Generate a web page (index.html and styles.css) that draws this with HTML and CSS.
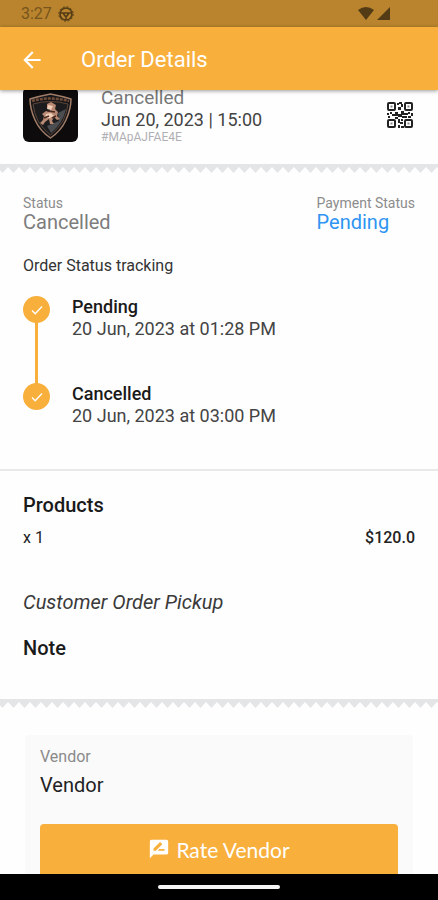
FILE: index.html
```html
<!DOCTYPE html>
<html lang="en">
<head>
<meta charset="utf-8">
<meta name="viewport" content="width=device-width, initial-scale=1">
<title>Order Details</title>
<link rel="stylesheet" href="styles.css">
</head>
<body>
<svg class="defs" aria-hidden="true">
  <defs>
    <pattern id="teeth" width="11" height="9" patternUnits="userSpaceOnUse" x="-3">
      <path d="M0 0H11V3L5.500 9L0 3Z" fill="#e4e5e7"/>
    </pattern>
  </defs>
</svg>
<div class="statusbar">
  <span class="clock">3:27</span>
  <svg class="status-app" viewBox="0 0 16 16" aria-hidden="true">
    <circle cx="8" cy="8" r="6" fill="none" stroke="currentColor" stroke-width="1.600"/>
    <circle cx="8" cy="8" r="7.200" fill="none" stroke="currentColor" stroke-width="1" stroke-dasharray="2 1.800"/>
    <path d="M2 7H14M8 10V14M5 7L7 10H9L11 7" fill="none" stroke="currentColor" stroke-width="1.500"/>
  </svg>
  <span class="signals">
    <svg width="16" height="13" viewBox="0 0 16 13" aria-hidden="true"><path d="M0 3Q8-3 16 3L8 13Z" fill="currentColor"/></svg>
    <svg width="13" height="13" viewBox="0 0 13 13" aria-hidden="true"><path d="M13 0V13H0Z" fill="currentColor"/></svg>
  </span>
</div>
<header class="appbar">
  <button class="back" type="button" aria-label="Back">
    <svg viewBox="0 0 24 24" aria-hidden="true"><path d="M20 11H7.830l5.590-5.590L12 4l-8 8 8 8 1.410-1.410L7.830 13H20z" fill="currentColor"/></svg>
  </button>
  <h1>Order Details</h1>
</header>
<main>
  <section class="summary">
    <svg class="thumb" viewBox="0 0 55 55" role="img" aria-label="Vendor logo">
      <rect width="55" height="55" fill="#0d0b0b"/>
      <path d="M7 12Q17 9 27.500 7Q38 9 48 12Q48 22 43 33Q38 44 27.500 51Q17 44 12 33Q7 22 7 12Z" fill="#17171a" stroke="#a07d68" stroke-width="1.500"/>
      <path d="M10 17Q27 12 45 17Q44 26 40 34Q35 42 27.500 48Q20 42 15 34Q11 26 10 17Z" fill="#1c1c1e" stroke="#5d4638" stroke-width="1"/>
      <path d="M35 26L43 22Q40 36 28 46L24 39L36 34Z" fill="#4b4d50"/>
      <path d="M9 14Q27 9 46 14" fill="none" stroke="#704c39" stroke-width="2.500" stroke-dasharray="3 1"/>
      <path d="M24 17L28 15L33 18L32 22L35 25L34 29L37 32L34 33L31 30L29 34L31 37L27 37L26 32L22 35L20 38L17 36L20 33L21 29L19 27L23 24L26 25L28 22L24 21Z" fill="#b88973"/>
      <path d="M25 18L30 19L28 23L24 22ZM23 27L28 26L31 29L27 31L22 31Z" fill="#f0cdb7"/>
      <path d="M25 24L32 25M21 31L26 29M29 31L33 29" stroke="#4a2921" stroke-width="1.500"/>
    </svg>
    <div class="summary-text">
      <p class="state">Cancelled</p>
      <p class="when">Jun 20, 2023 | 15:00</p>
      <p class="code">#MApAJFAE4E</p>
    </div>
    <button class="qr" type="button" aria-label="Show QR code">
      <svg viewBox="0 0 26 26" aria-hidden="true">
        <g fill="none" stroke="#222" stroke-width="2">
          <rect x="1" y="1" width="7" height="7" rx="1"/><rect x="18" y="1" width="7" height="7" rx="1"/>
          <rect x="1" y="18" width="7" height="7" rx="1"/><rect x="18" y="18" width="7" height="7" rx="1"/>
        </g>
        <path d="M3.500 3.500h2v2h-2zM20.500 3.500h2v2h-2zM3.500 20.500h2v2h-2zM20.500 20.500h2v2h-2z" fill="#888"/>
        <path d="M10 1h2v2h-2zM12 0h3v2h-3zM14 2h2v3h-2zM11 5h3v3h-3zM0 11h2v2h-2zM3 10h2v2h-2zM1 14h2v2h-2zM5 12h4v2h-4zM8 10h3v4h-3zM11 12h4v3h-4zM14 9h3v4h-3zM17 11h4v2h-4zM21 10h2v2h-2zM24 11h2v3h-2zM15 14h5v2h-5zM21 14h3v2h-3zM8 15h3v2h-3zM11 17h2v4h-2zM14 17h2v2h-2zM13 20h3v2h-3zM11 23h2v3h-2zM14 24h3v2h-3z" fill="#222"/>
      </svg>
    </button>
  </section>
  <svg class="zigzag" aria-hidden="true"><rect width="100%" height="9" fill="url(#teeth)"/></svg>
  <section class="status">
    <div class="status-row">
      <div><p class="label">Status</p><p class="value">Cancelled</p></div>
      <div><p class="label">Payment Status</p><p class="value pending">Pending</p></div>
    </div>
    <h2 class="tracking-title">Order Status tracking</h2>
    <ol class="timeline">
      <li>
        <span class="dot"><svg viewBox="0 0 12 12" aria-hidden="true"><path d="M1 6.500L4.200 9.700L11 2.500" fill="none" stroke="#fff" stroke-width="1.300"/></svg></span>
        <div><p class="step">Pending</p><p class="time">20 Jun, 2023 at 01:28 PM</p></div>
      </li>
      <li>
        <span class="dot"><svg viewBox="0 0 12 12" aria-hidden="true"><path d="M1 6.500L4.200 9.700L11 2.500" fill="none" stroke="#fff" stroke-width="1.300"/></svg></span>
        <div><p class="step">Cancelled</p><p class="time">20 Jun, 2023 at 03:00 PM</p></div>
      </li>
    </ol>
  </section>
  <section class="products">
    <h2>Products</h2>
    <div class="product"><span>x 1</span><span class="price">$120.0</span></div>
    <p class="pickup">Customer Order Pickup</p>
    <h2>Note</h2>
  </section>
  <svg class="zigzag" aria-hidden="true"><rect width="100%" height="9" fill="url(#teeth)"/></svg>
  <section class="vendor">
    <p class="vendor-label">Vendor</p>
    <p class="vendor-name">Vendor</p>
    <button class="rate" type="button">
      <svg viewBox="0 0 24 24" aria-hidden="true"><path d="M20 2H4c-1.100 0-1.990.9-1.990 2L2 22l4-4h14c1.100 0 2-.9 2-2V4c0-1.100-.9-2-2-2zM6 14v-2.470l6.880-6.880c.2-.2.510-.2.710 0l1.770 1.770c.2.200.2.510 0 .710L8.470 14H6zm12 0h-7.500l2-2H18v2z" fill="currentColor"/></svg>
      Rate Vendor
    </button>
  </section>
</main>
<div class="navbar"><span class="handle"></span></div>
</body>
</html>
```
FILE: styles.css
```css
* { box-sizing: border-box; }
body, h1, h2, p, ol { margin: 0; padding: 0; }
body {
  height: 100vh;
  display: flex;
  flex-direction: column;
  overflow: hidden;
  background: #fefefe;
  color: #222;
  font-family: Roboto, "Liberation Sans", sans-serif;
  font-size: 18px;
}
button { border: 0; padding: 0; background: none; font: inherit; color: inherit; }
svg { display: block; }
.defs { position: absolute; width: 0; height: 0; }

.statusbar {
  flex: none;
  display: flex;
  align-items: center;
  height: 27px;
  padding: 0 48px 0 21px;
  background: #b9842d;
  color: #533b16;
}
.clock { font-size: 16px; color: #78551e; }
.status-app { width: 16px; height: 16px; margin-left: 6px; }
.signals { display: flex; gap: 3px; margin-left: auto; }

.appbar {
  flex: none;
  position: relative;
  z-index: 1;
  display: flex;
  align-items: center;
  gap: 36px;
  height: 63px;
  padding: 2px 19px 0;
  background: #f8af3c;
  color: #fff;
  box-shadow: 0 1px 4px rgba(0, 0, 0, 0.4);
}
.back svg { width: 26px; height: 26px; }
.appbar h1 { font-size: 22px; font-weight: 400; }

main { flex: 1; min-height: 0; overflow: hidden; }

.summary {
  display: flex;
  gap: 23px;
  margin-top: -3px;
  padding: 0 25px 21px 23px;
}
.thumb { flex: none; width: 55px; height: 55px; border-radius: 6px; }
.summary-text { flex: 1; }
.state { font-size: 19px; line-height: 22px; color: #777; }
.when { line-height: 22px; color: #444; }
.code { font-size: 12px; line-height: 12px; color: #b0b0b4; }
.qr { align-self: center; }
.qr svg { width: 26px; height: 26px; }

.zigzag { width: 100%; height: 9px; }

.status { padding: 22px 23px 42px; border-bottom: 2px solid #e9e9e9; }
.status-row { display: flex; justify-content: space-between; }
.label { font-size: 14px; line-height: 16px; color: #8c8c8c; }
.value { font-size: 20px; line-height: 22px; color: #7d7d7d; }
.pending { color: #2f94f2; }
.tracking-title { margin: 22px 0 19px; font-size: 16px; font-weight: 400; line-height: 22px; color: #333; }
.timeline { list-style: none; }
.timeline li { position: relative; display: flex; gap: 22px; min-height: 87px; }
.timeline li:last-child { min-height: 0; }
.timeline li:not(:last-child)::before {
  content: "";
  position: absolute;
  top: 20px;
  bottom: -6px;
  left: 12px;
  width: 3px;
  background: #f8af3c;
}
.dot {
  position: relative;
  flex: none;
  display: grid;
  place-items: center;
  width: 27px;
  height: 27px;
  border-radius: 50%;
  background: #f8af3c;
}
.dot svg { width: 12px; height: 12px; }
.step { font-weight: 500; line-height: 22px; color: #1a1a1a; }
.time { line-height: 22px; color: #444; }

.products { padding: 21px 23px 38px; }
.products h2 { font-size: 20px; font-weight: 500; line-height: 26px; color: #1a1a1a; }
.product { display: flex; justify-content: space-between; margin-top: 9px; font-size: 16px; line-height: 22px; }
.price { font-weight: 500; }
.pickup { margin: 40px 0 20px; font-size: 20px; font-style: italic; line-height: 26px; color: #3a3a3a; }

.vendor {
  margin: 27px 25px 0;
  padding: 11px 15px;
  border-radius: 4px;
  background: #fafafa;
}
.vendor-label { font-size: 16px; line-height: 22px; color: #8a8a8a; }
.vendor-name { margin: 4px 0 26px; font-size: 20px; line-height: 26px; }
.rate {
  display: flex;
  align-items: center;
  justify-content: center;
  gap: 6px;
  width: 100%;
  height: 56px;
  padding-bottom: 6px;
  border-radius: 4px;
  background: #f8af3c;
  color: #fff;
  font-family: Lato, Roboto, sans-serif;
  font-size: 21px;
}
.rate svg { width: 22px; height: 22px; }

.navbar {
  flex: none;
  position: relative;
  display: grid;
  place-items: center;
  height: 26px;
  background: #000;
}
.handle { width: 28%; height: 4px; border-radius: 2px; background: #f5f5f5; }
```
